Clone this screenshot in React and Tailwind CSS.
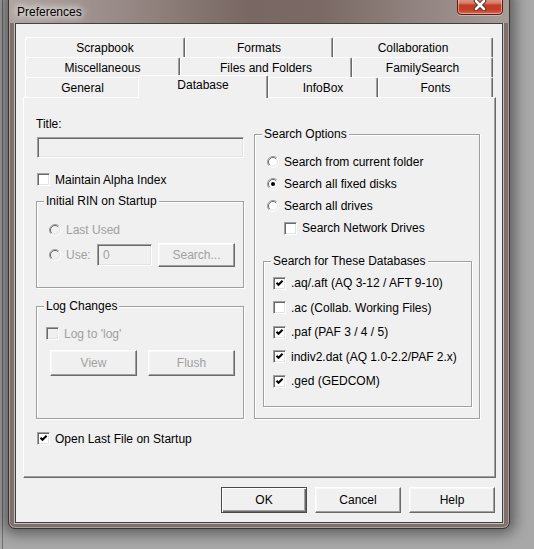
import React from "react";

function Check({ checked, disabled }) {
  return (
    <span
      className={`relative inline-block w-[13px] h-[13px] shrink-0 border border-t-[#a0a0a0] border-l-[#a0a0a0] border-r-white border-b-white shadow-[inset_1px_1px_0_#696969,inset_-1px_-1px_0_#e3e3e3] ${
        disabled ? "bg-[#f0f0f0]" : "bg-white"
      }`}
    >
      {checked && (
        <svg className="absolute left-[-1px] top-[-1px]" width="13" height="13" viewBox="0 0 13 13">
          <polyline points="3.5,5.8 5.5,7.8 9.6,3.7" fill="none" stroke="#000" strokeWidth="2" />
        </svg>
      )}
    </span>
  );
}

function Radio({ checked, disabled }) {
  return (
    <svg className="shrink-0" width="12" height="12" viewBox="0 0 12 12">
      <circle cx="6" cy="6" r="5.5" fill={disabled ? "#f0f0f0" : "#ffffff"} />
      <path d="M2.1 9.9 A5.5 5.5 0 0 1 9.9 2.1" fill="none" stroke="#9a9a9a" strokeWidth="1" />
      <path d="M2.8 9.2 A4.5 4.5 0 0 1 9.2 2.8" fill="none" stroke="#6a6a6a" strokeWidth="1" />
      <path d="M9.9 2.1 A5.5 5.5 0 0 1 2.1 9.9" fill="none" stroke="#ffffff" strokeWidth="1" />
      <path d="M9.2 2.8 A4.5 4.5 0 0 1 2.8 9.2" fill="none" stroke="#e3e3e3" strokeWidth="1" />
      {checked && <circle cx="6" cy="6" r="2" fill="#000" />}
    </svg>
  );
}

function Group({ legend, className, children }) {
  return (
    <div
      className={`relative border border-[#a0a0a0] shadow-[inset_1px_1px_0_#ffffff,1px_1px_0_#ffffff] ${className}`}
    >
      <span className="absolute left-[7px] top-[-8px] px-[2px] bg-[#f0f0f0] leading-[14px] h-[14px] whitespace-nowrap">
        {legend}
      </span>
      {children}
    </div>
  );
}

function Btn({ className, disabled, children, isDefault }) {
  return (
    <div
      className={`flex items-center justify-center bg-[#f0f0f0] ${
        isDefault
          ? "border border-[#4a4a4a] shadow-[inset_1px_1px_0_#ffffff,inset_-1px_-1px_0_#696969,inset_-2px_-2px_0_#a0a0a0]"
          : "border border-t-white border-l-white border-r-[#696969] border-b-[#696969] shadow-[inset_-1px_-1px_0_#a0a0a0,inset_1px_1px_0_#f8f8f8]"
      } ${disabled ? "text-[#a0a0a0]" : "text-black"} ${className}`}
    >
      {children}
    </div>
  );
}

function Tab({ className, children }) {
  return (
    <div
      className={`flex items-center justify-center h-[20px] bg-[#f0f0f0] border-t border-l border-r border-t-white border-l-white border-r-[#696969] shadow-[inset_-1px_0_0_#a0a0a0] rounded-tl-[3px] rounded-tr-[2px] leading-[14px] whitespace-nowrap ${className}`}
    >
      {children}
    </div>
  );
}

export default function App() {
  return (
    <div className="relative w-[534px] h-[549px] overflow-hidden bg-[#a8a8a8] font-['Liberation_Sans',Arial,sans-serif] text-[12px] text-black">
      <div className="absolute left-[2px] top-0 w-px h-full bg-[#707070]" />
      {/* window */}
      <div className="absolute left-[8px] top-[-8px] w-[502px] h-[537px] rounded-[7px] border border-[#3b3331] bg-[#7e716d] shadow-[0_0_14px_5px_rgba(0,0,0,0.45),inset_0_0_0_1px_rgba(255,255,255,0.35)] flex flex-col">
        {/* title bar */}
        <div className="relative h-[30px] shrink-0 pl-[8px] pt-[10px] rounded-t-[6px] bg-[linear-gradient(90deg,#aea39f_0%,#988a86_22%,#786762_48%,#7a6964_62%,#958884_85%,#a69c98_100%)]">
          <span className="leading-[14px] [text-shadow:0_0_6px_#ffffff,0_0_10px_#ffffff,0_0_14px_rgba(255,255,255,0.8)]">
            Preferences
          </span>
          <div className="absolute right-[6px] top-[2px] w-[46px] h-[20px] rounded-b-[4px] border border-[#5a1d16] bg-[linear-gradient(180deg,#e6aa9d_0%,#d9806d_38%,#c23b25_52%,#c3402a_78%,#d66a53_100%)] shadow-[inset_0_0_0_1px_rgba(255,210,200,0.55),0_1px_0_rgba(255,255,255,0.35)] flex items-center justify-center">
            <svg width="14" height="12" viewBox="0 0 14 12">
              <path d="M3 2 L11 10 M11 2 L3 10" stroke="#4a1f1a" strokeWidth="4.4" strokeLinecap="round" />
              <path d="M3 2 L11 10 M11 2 L3 10" stroke="#ffffff" strokeWidth="2.6" strokeLinecap="round" />
            </svg>
          </div>
        </div>
        {/* client */}
        <div className="mx-[6px] h-[500px] shrink-0 border border-[#3f3f3f] bg-[#f0f0f0] shadow-[0_0_0_1px_rgba(255,255,255,0.55)] flex flex-col">
          <div className="ml-[7px] mt-[13px] w-[473px]">
            <div className="flex ml-[2px] h-[20px]">
              <Tab className="w-[160px]">Scrapbook</Tab>
              <Tab className="w-[148px]">Formats</Tab>
              <Tab className="w-[160px]">Collaboration</Tab>
            </div>
            <div className="flex ml-[2px] h-[20px]">
              <Tab className="w-[155px]">Miscellaneous</Tab>
              <Tab className="w-[172px]">Files and Folders</Tab>
              <Tab className="w-[141px]">FamilySearch</Tab>
            </div>
            <div className="flex ml-[2px] h-[20px]">
              <Tab className="w-[115px]">General</Tab>
              <div className="relative z-10 -ml-[2px] -mt-[2px] w-[130px] h-[23px] flex justify-center pt-[2px] bg-[#f0f0f0] border-t border-l border-r border-t-white border-l-white border-r-[#696969] shadow-[inset_-1px_0_0_#a0a0a0] rounded-tl-[3px] rounded-tr-[2px] leading-[14px]">
                Database
              </div>
              <Tab className="w-[110px]">InfoBox</Tab>
              <Tab className="w-[115px]">Fonts</Tab>
            </div>
            {/* panel */}
            <div className="h-[381px] flex pl-[12px] border border-t-white border-l-white border-r-[#696969] border-b-[#696969] shadow-[inset_-1px_-1px_0_#a0a0a0]">
              {/* left column */}
              <div className="w-[208px] flex flex-col shrink-0">
                <div className="mt-[19px] h-[14px] leading-[14px]">Title:</div>
                <div className="mt-[6px] ml-[1px] w-[207px] h-[21px] bg-[#f0f0f0] border border-t-[#a0a0a0] border-l-[#a0a0a0] border-r-white border-b-white shadow-[inset_1px_1px_0_#696969,inset_-1px_-1px_0_#e3e3e3]" />
                <div className="mt-[15px] ml-[1px] flex items-center h-[13px] gap-[5px] leading-[14px]">
                  <Check />
                  <span>Maintain Alpha Index</span>
                </div>
                <Group legend="Initial RIN on Startup" className="mt-[15px] h-[87px]">
                  <div className="mt-[21px] ml-[12px] flex items-center h-[13px] gap-[5px] text-[#a0a0a0] leading-[14px]">
                    <Radio disabled />
                    <span>Last Used</span>
                  </div>
                  <div className="mt-[7px] ml-[12px] flex items-center h-[24px] text-[#a0a0a0]">
                    <Radio disabled />
                    <span className="ml-[5px] w-[31px] leading-[14px]">Use:</span>
                    <div className="w-[55px] h-[22px] flex items-center pl-[5px] bg-[#f0f0f0] border border-t-[#a0a0a0] border-l-[#a0a0a0] border-r-white border-b-white shadow-[inset_1px_1px_0_#696969,inset_-1px_-1px_0_#e3e3e3] leading-[14px]">
                      0
                    </div>
                    <Btn disabled className="ml-[6px] w-[77px] h-[24px]">
                      Search...
                    </Btn>
                  </div>
                </Group>
                <Group legend="Log Changes" className="mt-[18px] h-[113px]">
                  <div className="mt-[20px] ml-[9px] flex items-center h-[13px] gap-[5px] text-[#a0a0a0] leading-[14px]">
                    <Check disabled />
                    <span>Log to 'log'</span>
                  </div>
                  <div className="mt-[10px] ml-[13px] flex gap-[11px]">
                    <Btn disabled className="w-[87px] h-[26px]">
                      View
                    </Btn>
                    <Btn disabled className="w-[87px] h-[26px]">
                      Flush
                    </Btn>
                  </div>
                </Group>
                <div className="mt-[13px] ml-[1px] flex items-center h-[13px] gap-[5px] leading-[14px]">
                  <Check checked />
                  <span>Open Last File on Startup</span>
                </div>
              </div>
              {/* right column */}
              <div className="ml-[10px] w-[226px] flex flex-col shrink-0">
                <Group legend="Search Options" className="mt-[36px] h-[285px]">
                  <div className="mt-[16px]" />
                  <div className="h-[22px] ml-[12px] flex items-center gap-[5px] leading-[14px]">
                    <Radio />
                    <span>Search from current folder</span>
                  </div>
                  <div className="h-[22px] ml-[12px] flex items-center gap-[5px] leading-[14px]">
                    <Radio checked />
                    <span>Search all fixed disks</span>
                  </div>
                  <div className="h-[22px] ml-[12px] flex items-center gap-[5px] leading-[14px]">
                    <Radio />
                    <span>Search all drives</span>
                  </div>
                  <div className="h-[22px] ml-[29px] flex items-center gap-[5px] leading-[14px]">
                    <Check />
                    <span>Search Network Drives</span>
                  </div>
                  <Group legend="Search for These Databases" className="mt-[22px] ml-[8px] w-[209px] h-[146px]">
                    <div className="mt-[9px]" />
                    <div className="h-[24.5px] ml-[9px] flex items-center gap-[5px] leading-[14px]">
                      <Check checked />
                      <span>.aq/.aft (AQ 3-12 / AFT 9-10)</span>
                    </div>
                    <div className="h-[24.5px] ml-[9px] flex items-center gap-[5px] leading-[14px]">
                      <Check />
                      <span>.ac (Collab. Working Files)</span>
                    </div>
                    <div className="h-[24.5px] ml-[9px] flex items-center gap-[5px] leading-[14px]">
                      <Check checked />
                      <span>.paf (PAF 3 / 4 / 5)</span>
                    </div>
                    <div className="h-[24.5px] ml-[9px] flex items-center gap-[5px] leading-[14px]">
                      <Check checked />
                      <span>indiv2.dat (AQ 1.0-2.2/PAF 2.x)</span>
                    </div>
                    <div className="h-[24.5px] ml-[9px] flex items-center gap-[5px] leading-[14px]">
                      <Check checked />
                      <span>.ged (GEDCOM)</span>
                    </div>
                  </Group>
                </Group>
              </div>
            </div>
          </div>
          {/* dialog buttons */}
          <div className="mt-[9px] mr-[7px] flex justify-end gap-[8px]">
            <Btn isDefault className="w-[86px] h-[26px]">
              OK
            </Btn>
            <Btn className="w-[86px] h-[26px]">Cancel</Btn>
            <Btn className="w-[86px] h-[26px]">Help</Btn>
          </div>
        </div>
      </div>
    </div>
  );
}
